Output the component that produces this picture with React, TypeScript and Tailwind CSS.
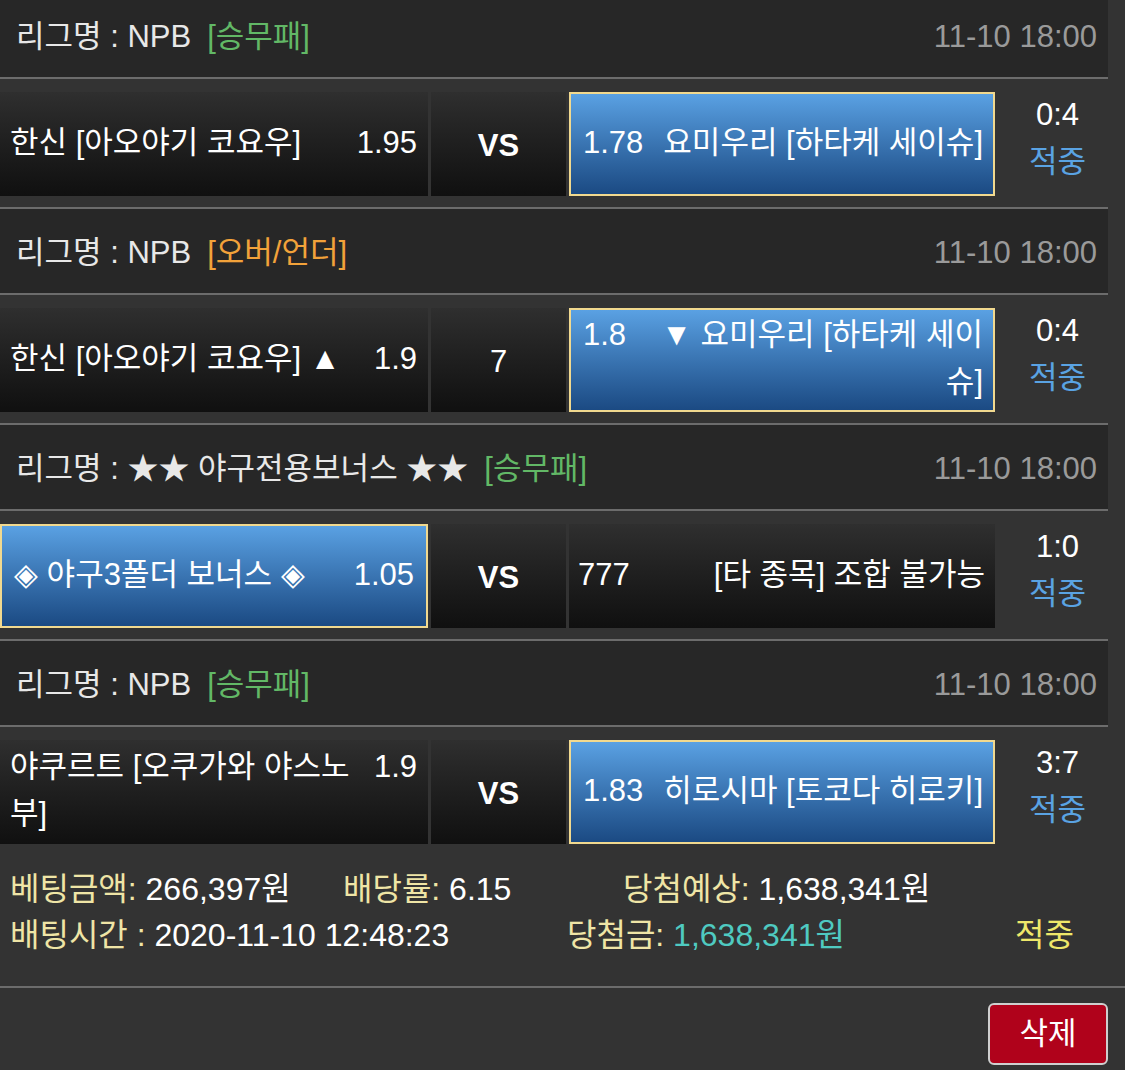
import React from 'react';

type Side = { name: string; odds: string; picked: boolean };

interface Game {
  league: string;
  type: string;
  typeColor: string;
  time: string;
  home: Side;
  mid: string;
  midBold: boolean;
  away: Side;
  score: string;
}

const games: Game[] = [
  {
    league: 'NPB',
    type: '[승무패]',
    typeColor: 'text-[#62b866]',
    time: '11-10 18:00',
    home: { name: '한신 [아오야기 코요우]', odds: '1.95', picked: false },
    mid: 'VS',
    midBold: true,
    away: { name: '요미우리 [하타케 세이슈]', odds: '1.78', picked: true },
    score: '0:4',
  },
  {
    league: 'NPB',
    type: '[오버/언더]',
    typeColor: 'text-[#f2a23a]',
    time: '11-10 18:00',
    home: { name: '한신 [아오야기 코요우] ▲', odds: '1.9', picked: false },
    mid: '7',
    midBold: false,
    away: { name: '▼ 요미우리 [하타케 세이슈]', odds: '1.8', picked: true },
    score: '0:4',
  },
  {
    league: '★★ 야구전용보너스 ★★',
    type: '[승무패]',
    typeColor: 'text-[#62b866]',
    time: '11-10 18:00',
    home: { name: '◈ 야구3폴더 보너스 ◈', odds: '1.05', picked: true },
    mid: 'VS',
    midBold: true,
    away: { name: '[타 종목] 조합 불가능', odds: '777', picked: false },
    score: '1:0',
  },
  {
    league: 'NPB',
    type: '[승무패]',
    typeColor: 'text-[#62b866]',
    time: '11-10 18:00',
    home: { name: '야쿠르트 [오쿠가와 야스노부]', odds: '1.9', picked: false },
    mid: 'VS',
    midBold: true,
    away: { name: '히로시마 [토코다 히로키]', odds: '1.83', picked: true },
    score: '3:7',
  },
];

const cellBase = 'h-[104px] flex items-center text-white';
const darkCell = 'bg-linear-to-b from-[#2f2f2f] to-[#101010]';
const blueCell = 'bg-linear-to-b from-[#5aa1e3] to-[#1b4a83] border-2 border-[#f1d98f]';

const GameBlock: React.FC<{ game: Game; first: boolean }> = ({ game, first }) => {
  const { home, away } = game;
  return (
    <div>
      {!first && <div className="h-[2px] bg-[#6c6c6c]" />}
      <div className={`h-[84px] bg-[#272727] flex items-center justify-between pl-4 pr-[11px] pt-1 ${first ? '-mt-[7px]' : ''}`}>
        <div className="text-[#e8e8e8]">
          리그명 : {game.league}
          <span className={`ml-4 ${game.typeColor}`}>{game.type}</span>
        </div>
        <div className="text-[#9a9a9a]">{game.time}</div>
      </div>
      <div className="h-[2px] bg-[#6c6c6c]" />
      <div className="h-[128px] pt-[13px] pb-[11px] flex">
        <div className={`w-[428px] pb-1 ${cellBase} ${home.picked ? `${blueCell} pl-3 pr-3` : `${darkCell} pl-[10px] pr-[11px]`}`}>
          <div className="flex w-full items-start">
            <span className="flex-1 leading-[47px]">{home.name}</span>
            <span className="ml-6 shrink-0 leading-[47px]">{home.odds}</span>
          </div>
        </div>
        <div className={`ml-[3px] w-[135px] justify-center pt-1 ${cellBase} ${darkCell} ${game.midBold ? 'font-bold' : ''}`}>
          {game.mid}
        </div>
        <div className={`ml-[3px] w-[426px] pb-1 ${cellBase} ${away.picked ? `${blueCell} pl-3 pr-[10px]` : `${darkCell} pl-[9px] pr-[10px]`}`}>
          <div className="flex w-full items-start">
            <span className="shrink-0 leading-[47px]">{away.odds}</span>
            <span className="ml-4 flex-1 text-right leading-[47px]">{away.name}</span>
          </div>
        </div>
        <div className="flex-1 flex flex-col items-center justify-center pl-3 pb-[12px]">
          <div className="text-white leading-[47px]">{game.score}</div>
          <div className="text-[#5aa3e3] leading-[47px]">적중</div>
        </div>
      </div>
    </div>
  );
};

export default function App() {
  return (
    <div className="w-[1125px] h-[1070px] overflow-hidden bg-[#333333] text-[31px] font-['Liberation_Sans','Noto_Sans_CJK_KR',sans-serif]">
      <div className="w-[1108px]">
        {games.map((g, i) => (
          <GameBlock key={i} game={g} first={i === 0} />
        ))}
      </div>

      <div className="pt-[11px] pb-[28px] pl-[10px] leading-[46px] text-[32px]">
        <div className="flex">
          <span className="w-[333px]">
            <span className="text-[#efe5a6]">베팅금액:</span> <span className="text-white">266,397원</span>
          </span>
          <span className="w-[280px]">
            <span className="text-[#efe5a6]">배당률:</span> <span className="text-white">6.15</span>
          </span>
          <span>
            <span className="text-[#efe5a6]">당첨예상:</span> <span className="text-white">1,638,341원</span>
          </span>
        </div>
        <div className="flex">
          <span className="w-[557px]">
            <span className="text-[#efe5a6]">배팅시간 :</span> <span className="text-white">2020-11-10 12:48:23</span>
          </span>
          <span className="w-[448px]">
            <span className="text-[#efe5a6]">당첨금:</span> <span className="text-[#4fcac1]">1,638,341원</span>
          </span>
          <span className="text-[#efe86a]">적중</span>
        </div>
      </div>

      <div className="h-[2px] bg-[#6c6c6c]" />

      <div className="flex justify-end pt-[15px] pr-[17px]">
        <button className="w-[120px] h-[62px] rounded-md border-2 border-[#cfcfcf] bg-[#b0021b] text-white text-[31px]">
          삭제
        </button>
      </div>
    </div>
  );
}
